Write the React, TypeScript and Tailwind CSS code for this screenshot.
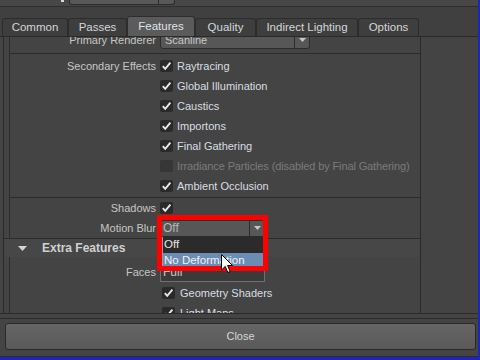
import { ReactNode } from 'react'

function Check({ on = true, disabled = false }: { on?: boolean; disabled?: boolean }) {
  return (
    <span
      className={
        disabled
          ? 'w-[13px] h-[12px] rounded-[2px] bg-[#363636] flex items-center justify-center shrink-0'
          : 'w-[13px] h-[12px] rounded-[2px] bg-[#2a2a2a] flex items-center justify-center shrink-0'
      }
    >
      {on && (
        <svg width="11" height="10" viewBox="0 0 11 10">
          <path d="M1.8 5.2 L4.2 7.8 L9.4 1.6" fill="none" stroke="#e8e8e8" strokeWidth="1.9" />
        </svg>
      )}
    </span>
  )
}

function Arrow() {
  return (
    <svg width="7" height="4" viewBox="0 0 7 4">
      <path d="M0 0 H7 L3.5 4 Z" fill="#c8c8c8" />
    </svg>
  )
}

interface RowProps {
  label?: string
  children?: ReactNode
}

function Row({ label, children }: RowProps) {
  return (
    <div className="h-[20px] flex items-center">
      <div className="w-[147px] text-right text-[#c6c6c6] pr-[1px]">{label}</div>
      <div className="ml-[3px] flex items-center">{children}</div>
    </div>
  )
}

function CheckItem({ label, disabled = false }: { label: string; disabled?: boolean }) {
  return (
    <Row>
      <Check on={!disabled} disabled={disabled} />
      <span
        className={
          disabled
            ? 'ml-[4px] text-[#7b7b7b] tracking-[-0.12px]'
            : 'ml-[4px] text-[#d9dde3]'
        }
      >
        {label}
      </span>
    </Row>
  )
}

const tabs = [
  { name: 'Common', w: 'w-[66px]' },
  { name: 'Passes', w: 'w-[59px]' },
  { name: 'Features', w: 'w-[68px]', active: true },
  { name: 'Quality', w: 'w-[61px]' },
  { name: 'Indirect Lighting', w: 'w-[102px]' },
  { name: 'Options', w: 'w-[61px]' },
]

export default function App() {
  return (
    <div className="relative w-[480px] h-[360px] overflow-hidden bg-[#444444] border-r-2 border-b-[3px] border-[#1f25b4] font-['Liberation_Sans',Arial,sans-serif] text-[11px] leading-none">
      {/* top strip */}
      <div className="h-[7px] bg-[#474747] border-b border-[#2e2e2e] flex">
        <div className="ml-[61px] w-[3px] h-[2px] bg-[#d8d8d8]" />
        <div className="ml-[5px] w-[106px] h-[5px] bg-[#585858] border border-t-0 border-[#2c2c2c] rounded-b-[3px] flex justify-end">
          <div className="w-[16px] h-full border-l border-[#2c2c2c]" />
        </div>
      </div>
      <div className="h-[9px] bg-[#404040]" />

      {/* tabs */}
      <div className="h-[20px] bg-[#404040] flex items-end pl-[2px]">
        {tabs.map((t) =>
          t.active ? (
            <div
              key={t.name}
              className={`${t.w} h-[20px] bg-[#5b5b5b] border border-b-0 border-[#2e2e2e] rounded-t-[3px] flex items-center justify-center text-[11.5px] text-[#dfe2e8]`}
            >
              {t.name}
            </div>
          ) : (
            <div
              key={t.name}
              className={`${t.w} h-[18px] bg-[#3e3e3e] border border-b-0 border-[#2c2c2c] rounded-t-[3px] flex items-center justify-center text-[11.5px] text-[#d4d6da]`}
            >
              {t.name}
            </div>
          )
        )}
      </div>

      {/* panel */}
      <div className="h-[278px] border-t border-b border-[#2a2a2a] flex">
        <div className="ml-[3px] w-[418px] border-l border-r border-[#2a2a2a] overflow-hidden">
          {/* rendering features */}
          <div className="ml-[5px] border-l border-[#2c2c2c]">
            <div className="-mt-[6px] pb-[4px] border-b border-[#2c2c2c]">
              <div className="h-[18px] flex items-center">
                <div className="w-[147px] text-right text-[#c6c6c6] pr-[1px]">Primary Renderer</div>
                <div className="ml-[3px] w-[150px] h-[18px] bg-[#575757] border border-[#2c2c2c] rounded-[3px] flex items-center">
                  <span className="flex-1 pl-[4px] text-[#c8c8c8]">Scanline</span>
                  <span className="w-[15px] h-full border-l border-[#2c2c2c] flex items-center justify-center">
                    <Arrow />
                  </span>
                </div>
              </div>
            </div>
            <div className="pt-[2px] pb-[1px] border-b border-[#2c2c2c]">
              <Row label="Secondary Effects">
                <Check />
                <span className="ml-[4px] text-[#d9dde3]">Raytracing</span>
              </Row>
              <CheckItem label="Global Illumination" />
              <CheckItem label="Caustics" />
              <CheckItem label="Importons" />
              <CheckItem label="Final Gathering" />
              <CheckItem label="Irradiance Particles (disabled by Final Gathering)" disabled />
              <CheckItem label="Ambient Occlusion" />
            </div>
            <Row label="Shadows">
              <Check />
            </Row>
            <Row label="Motion Blur">
              <div className="w-[105px] h-[17px] bg-[#575757] border border-[#2c2c2c] rounded-[3px] flex items-center">
                <span className="flex-1 pl-[2px] text-[#b8b8b8] text-[12px]">Off</span>
                <span className="w-[15px] h-full border-l border-[#2c2c2c] flex items-center justify-center">
                  <Arrow />
                </span>
              </div>
            </Row>
          </div>

          {/* extra features header */}
          <div className="h-[19px] border-t border-[#2c2c2c] bg-[#474747] flex items-center pl-[14px]">
            <svg width="9" height="5" viewBox="0 0 9 5">
              <path d="M0 0 H9 L4.5 5 Z" fill="#d4d4d4" />
            </svg>
            <span className="ml-[15px] font-bold text-[12px] text-[#d0d0d0]">Extra Features</span>
          </div>

          <div className="ml-[5px] border-l border-[#2c2c2c] pt-[4px]">
            <div className="h-[22px] flex items-center">
              <div className="w-[147px] text-right text-[#c6c6c6] pr-[1px]">Faces</div>
              <div className="ml-[3px] w-[105px] h-[20px] bg-[#3a3a3a] border border-[#707070] flex items-center">
                <span className="pl-[2px] text-[#c8c8c8] text-[12px]">Full</span>
              </div>
            </div>
            <div className="h-[20px] flex items-center pl-[152px]">
              <Check />
              <span className="ml-[5px] text-[#d9dde3]">Geometry Shaders</span>
            </div>
            <div className="h-[20px] flex items-center pl-[152px]">
              <Check />
              <span className="ml-[5px] text-[#d9dde3]">Light Maps</span>
            </div>
          </div>
        </div>
        <div className="flex-1" />
      </div>

      <div className="mt-[4px] h-px bg-[#2c2c2c]" />
      <div className="mt-[4px] ml-[5px] mr-[2px] h-[27px] rounded-[3px] border border-[#2a2a2a] bg-gradient-to-b from-[#666666] to-[#595959] flex items-center justify-center text-[11px] text-[#d6d6d6]">
        Close
      </div>
      <div className="mt-[6px] h-px bg-[#2c2c2c]" />

      {/* open option list */}
      <div className="absolute left-[162px] top-[237px] w-[101px] border-l border-[#9a9a9a] text-[11.5px]">
        <div className="h-[16px] bg-[#2b2b2b] text-[#e6e6e6] flex items-center pl-[1px]">Off</div>
        <div className="h-[15px] bg-[#6b8cb4] text-[#eef0f4] flex items-center pl-[1px]">No Deformation</div>
      </div>

      {/* annotation box */}
      <div className="absolute left-[157px] top-[215px] w-[111px] h-[56px] border-[5px] border-[#ff0000]" />

      {/* mouse cursor */}
      <svg className="absolute left-[221px] top-[254px]" width="13" height="20" viewBox="0 0 13 20">
        <path d="M0.5 0.5 L0.5 16 L4.2 12.4 L6.8 18.5 L9.2 17.5 L6.6 11.5 L11.5 11.5 Z" fill="#ffffff" stroke="#000000" strokeWidth="1" />
      </svg>
    </div>
  )
}
